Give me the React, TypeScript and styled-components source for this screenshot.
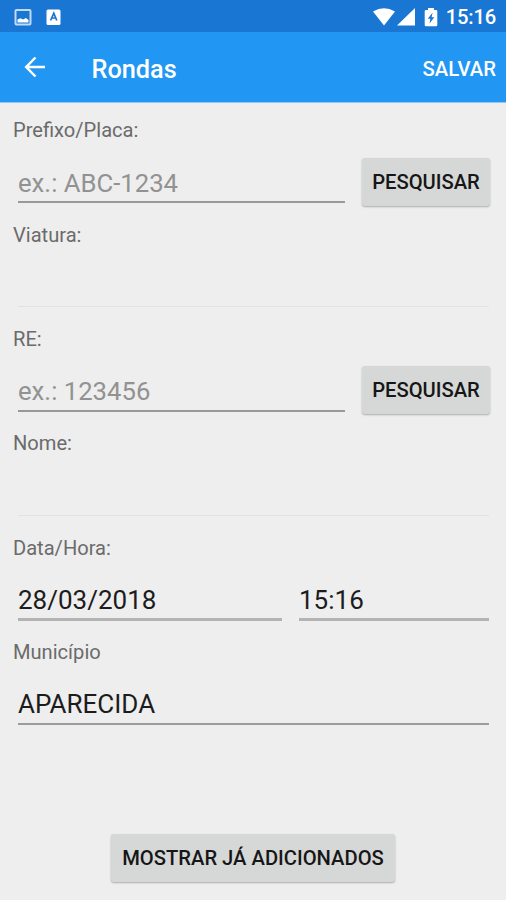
import React from "react";
import styled, { createGlobalStyle } from "styled-components";

const GlobalStyle = createGlobalStyle`
  * { box-sizing: border-box; }
  body { margin: 0; background: #eeeeee; font-family: Roboto, "Liberation Sans", sans-serif; }
`;

const Screen = styled.div`
  width: 506px;
  height: 900px;
  display: flex;
  flex-direction: column;
  background: #eeeeee;
  overflow: hidden;
`;

const StatusBar = styled.header`
  height: 32px;
  flex: none;
  display: flex;
  align-items: center;
  justify-content: space-between;
  padding: 2px 10px 0 14px;
  background: #1976d2;
  color: #fff;
`;

const StatusGroup = styled.div`
  display: flex;
  align-items: center;
`;

const NoticeIcons = styled(StatusGroup)`
  gap: 14px;
`;

const Clock = styled.time`
  margin-left: 8px;
  font-size: 20.2px;
  font-weight: 500;
  letter-spacing: -0.2px;
  line-height: 30px;
`;

const AppBar = styled.nav`
  height: 71px;
  flex: none;
  display: flex;
  align-items: center;
  padding: 4px 10px 0 24px;
  background: #2196f3;
  border-bottom: 1px solid #90c8f6;
  color: #fff;
`;

const BackButton = styled.button`
  display: flex;
  padding: 0;
  border: 0;
  background: none;
  color: inherit;
  margin-top: -4px;
`;

const Title = styled.h1`
  margin: 2px auto 0 45.5px;
  font-size: 25.3px;
  font-weight: 500;
  line-height: 32px;
`;

const SaveButton = styled.button`
  padding: 0;
  border: 0;
  background: none;
  color: inherit;
  font: 500 20.3px/28px Roboto, "Liberation Sans", sans-serif;
`;

const Form = styled.main`
  flex: 1;
  display: flex;
  flex-direction: column;
  padding: 14.4px 16px 18px 13px;
`;

const Field = styled.section`
  height: 104.3px;
  flex: none;
`;

const Label = styled.label`
  display: block;
  font-size: 20.1px;
  line-height: 26px;
  color: #6b6b6b;
`;

const Row = styled.div`
  display: flex;
  align-items: flex-start;
  gap: 17px;
  padding-left: 5px;
`;

type LineKind = "hint" | "value" | "date" | "empty";

const underline: Record<LineKind, string> = {
  hint: "2px solid #999999",
  value: "2px solid #9c9c9c",
  date: "3px solid #b3b3b3",
  empty: "1px solid #e2e2e2",
};

const Line = styled.div<{ $width?: number; $kind: LineKind }>`
  height: ${(p) => (p.$kind === "date" ? 60.6 : 59.8)}px;
  ${(p) => (p.$width ? `flex: none; width: ${p.$width}px;` : "flex: 1;")}
  padding-top: 23.4px;
  margin-right: ${(p) => (p.$width ? 0 : 1)}px;
  border-bottom: ${(p) => underline[p.$kind]};
  color: ${(p) => (p.$kind === "hint" ? "#929292" : "#1c1c1c")};
  font-size: ${(p) => (p.$kind === "hint" ? 25.7 : 26)}px;
  line-height: 32px;
  white-space: nowrap;
`;

const RaisedButton = styled.button`
  flex: none;
  height: 48px;
  padding: 0;
  border: 0;
  border-radius: 3px;
  background: #d6d8d7;
  color: #161616;
  font: 500 20.2px/28px Roboto, "Liberation Sans", sans-serif;
  white-space: nowrap;
  box-shadow: 0 1px 2px rgba(0, 0, 0, 0.28);
`;

const SearchButton = styled(RaisedButton)`
  width: 128px;
  margin: 14.4px 0 0;
`;

const ShowAddedButton = styled(RaisedButton)`
  width: 284px;
  margin: auto auto 0 98px;
`;

const PictureIcon = () => (
  <svg width="18" height="17" viewBox="0 0 18 17">
    <rect x="1.5" y="1" width="15" height="14.5" rx="1" fill="none" stroke="#c2daf5" strokeWidth="2" />
    <path d="M3.5 13.5V10.5L6.5 9.2L9 10.6L12 9L14.5 11V13.5Z" fill="#fff" />
  </svg>
);

const LetterIcon = () => (
  <svg width="16" height="17" viewBox="0 0 16 17">
    <rect x="0.5" y="0.5" width="14" height="15.5" rx="1.5" fill="#fff" />
    <path d="M4.6 11.5L7.8 4.2L10.8 11.5M5.7 9H9.8" fill="none" stroke="#1976d2" strokeWidth="1.7" />
  </svg>
);

const WifiIcon = () => (
  <svg width="24" height="18" viewBox="0 0 24 18">
    <path d="M1 3.5Q12-3 23 3.5L12 17.5Z" fill="#fff" />
  </svg>
);

const SignalIcon = () => (
  <svg width="20" height="18" viewBox="0 0 20 18">
    <path d="M1 17.5L19 0V17.5Z" fill="#fff" />
  </svg>
);

const BatteryIcon = () => (
  <svg width="14" height="19" viewBox="0 0 14 19">
    <path d="M4 0H10V2H12Q13.3 2 13.3 3.2V17Q13.3 18.3 12 18.3H2Q.7 18.3 .7 17V3.2Q.7 2 2 2H4Z" fill="#fff" />
    <path d="M8.6 4.5L3.8 10.8H6.4L5.5 15.5L10.3 9.2H7.6Z" fill="#1976d2" />
  </svg>
);

const BackIcon = () => (
  <svg width="22" height="22" viewBox="0 0 22 22" fill="none" stroke="#fff" strokeWidth="2.5">
    <path d="M21 11H3M11.5 1.5L2.2 11L11.5 20.5" />
  </svg>
);

const BatterySlot = styled.span`
  display: flex;
  margin-left: 8px;
`;

export default function App() {
  return (
    <Screen>
      <GlobalStyle />
      <StatusBar>
        <NoticeIcons>
          <PictureIcon />
          <LetterIcon />
        </NoticeIcons>
        <StatusGroup>
          <WifiIcon />
          <SignalIcon />
          <BatterySlot>
            <BatteryIcon />
          </BatterySlot>
          <Clock>15:16</Clock>
        </StatusGroup>
      </StatusBar>
      <AppBar>
        <BackButton aria-label="Voltar">
          <BackIcon />
        </BackButton>
        <Title>Rondas</Title>
        <SaveButton>SALVAR</SaveButton>
      </AppBar>
      <Form>
        <Field>
          <Label>Prefixo/Placa:</Label>
          <Row>
            <Line $kind="hint" $width={327}>ex.: ABC-1234</Line>
            <SearchButton>PESQUISAR</SearchButton>
          </Row>
        </Field>
        <Field>
          <Label>Viatura:</Label>
          <Row>
            <Line $kind="empty" />
          </Row>
        </Field>
        <Field>
          <Label>RE:</Label>
          <Row>
            <Line $kind="hint" $width={327}>ex.: 123456</Line>
            <SearchButton>PESQUISAR</SearchButton>
          </Row>
        </Field>
        <Field>
          <Label>Nome:</Label>
          <Row>
            <Line $kind="empty" />
          </Row>
        </Field>
        <Field>
          <Label>Data/Hora:</Label>
          <Row>
            <Line $kind="date" $width={264}>28/03/2018</Line>
            <Line $kind="date">15:16</Line>
          </Row>
        </Field>
        <Field>
          <Label>Município</Label>
          <Row>
            <Line $kind="value">APARECIDA</Line>
          </Row>
        </Field>
        <ShowAddedButton>MOSTRAR JÁ ADICIONADOS</ShowAddedButton>
      </Form>
    </Screen>
  );
}
